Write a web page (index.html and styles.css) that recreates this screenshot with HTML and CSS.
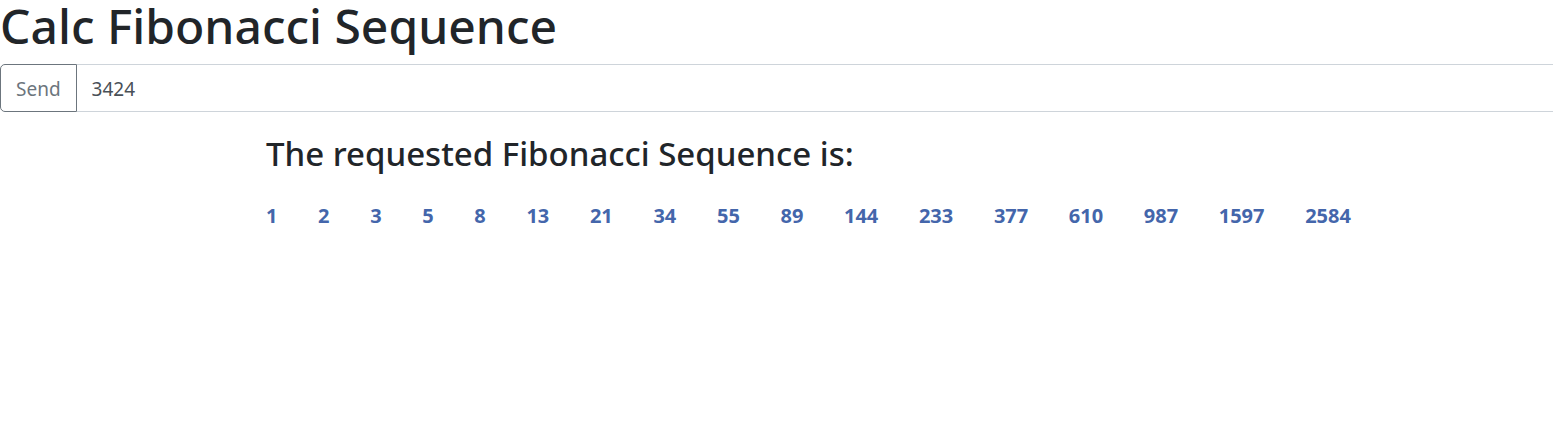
FILE: index.html
```
<!DOCTYPE html>
<html lang="en">
<head>
<meta charset="utf-8">
<title>Calc Fibonacci Sequence</title>
<link rel="stylesheet" href="styles.css">
</head>
<body>
<h1 class="title">Calc Fibonacci Sequence</h1>
<form class="input-group">
<button class="send" type="button">Send</button>
<input class="field" type="text" value="3424" aria-label="Number">
</form>
<main class="result">
<h2 class="subtitle">The requested Fibonacci Sequence is:</h2>
<ul class="sequence">
<li>1</li><li>2</li><li>3</li><li>5</li><li>8</li><li>13</li><li>21</li><li>34</li><li>55</li><li>89</li><li>144</li><li>233</li><li>377</li><li>610</li><li>987</li><li>1597</li><li>2584</li>
</ul>
</main>
</body>
</html>
```
FILE: styles.css
```
* { box-sizing: border-box; }
body {
  margin: 0;
  background: #fff;
  color: #212529;
  font-family: "Noto Sans", "Open Sans", sans-serif;
}
.title {
  margin: 0 0 12px;
  font-size: 48px;
  line-height: 52px;
  font-weight: 500;
}
.input-group {
  display: flex;
}
.send, .field {
  height: 48px;
  margin: 0;
  padding: 2px 15px 0;
  font-family: inherit;
  font-size: 19px;
  background: #fff;
}
.send {
  border: 1px solid #6c757d;
  border-radius: 5px 0 0 5px;
  color: #6c757d;
}
.field {
  flex: 1;
  min-width: 0;
  border: solid #ced4da;
  border-width: 1px 0;
  color: #495057;
}
.result {
  padding: 22px 202px 0 266px;
}
.subtitle {
  margin: 0 0 28px;
  font-size: 33px;
  line-height: 40px;
  font-weight: 500;
}
.sequence {
  display: flex;
  flex-wrap: wrap;
  justify-content: space-between;
  column-gap: 20px;
  margin: 0;
  padding: 0;
  list-style: none;
  color: #4466ab;
  font-size: 20px;
  line-height: 28px;
  font-weight: 700;
}
```
